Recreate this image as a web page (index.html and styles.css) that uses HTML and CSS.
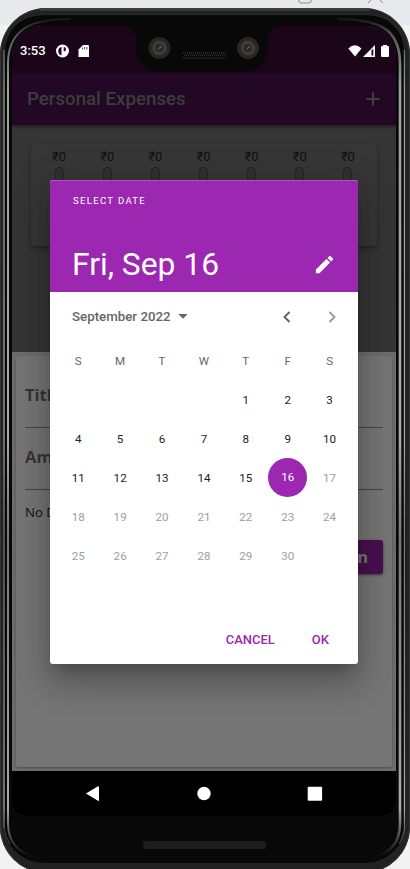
FILE: index.html
```html
<!DOCTYPE html>
<html lang="en">
<head>
<meta charset="utf-8">
<title>Personal Expenses</title>
<link rel="stylesheet" href="styles.css">
</head>
<body>
<div class="stage">
  <svg class="frame" width="410" height="869" viewBox="0 0 410 869" fill="none">
    <defs>
      <linearGradient id="edge" x1="0" y1="0" x2="0" y2="869" gradientUnits="userSpaceOnUse">
        <stop offset=".02" stop-color="#111"/><stop offset=".04" stop-color="#555"/><stop offset=".1" stop-color="#a0a0a2"/>
        <stop offset=".5" stop-color="#aaa"/><stop offset=".62" stop-color="#777"/><stop offset=".93" stop-color="#aaa"/><stop offset=".965" stop-color="#444"/><stop offset=".985" stop-color="#0a0a0a"/>
      </linearGradient>
    </defs>
    <path d="M299 0v1q0 2 2 2h8q2 0 2-2V0M368 3l4-4M383 3l-4-4" stroke="#8a8b90"/>
    <rect x="0" y="8" width="410" height="865" rx="46" fill="#222"/>
    <rect x=".5" y="8.500" width="409" height="864" rx="45.500" stroke="#333534"/>
    <path d="M40 9.500H370" stroke="#3d3f3e" stroke-width="2.500"/>
    <rect x="3" y="14" width="403" height="849" rx="41" fill="#080808"/>
    <path d="M4 70V56Q5 15 45 14.500H365Q405 15 405 56V70" stroke="#2b2c2c"/>
    <path d="M4 50V828" stroke="url(#edge)" stroke-width="1.300"/>
    <path d="M4.010 828L4 827.900Q5 836 10 844" stroke="#444"/>
    <path d="M70 19Q34 19 21 31Q8 42 8 64V823Q8 852 38 857.500" stroke="url(#edge)" stroke-width="2"/>
    <path d="M338 19Q374 19 388 31Q400 42 400 64V823Q400 852 372 857.500" stroke="url(#edge)" stroke-width="2.600"/>
    <path d="M404.500 50L404.510 828Q404 836 399 844" stroke="url(#edge)" stroke-width="1.400"/>
    <rect x="143" y="841" width="123" height="8" rx="3" fill="#1b1b1b"/>
    <path d="M144 843H265M145 845.500H265M144 848H265" stroke="#252525" stroke-dasharray="1 1"/>
  </svg>

  <div class="screen">
    <header class="status">
      <span class="clock">3:53</span>
      <svg class="status-left" width="34" height="14" viewBox="0 0 34 14">
        <circle cx="6.500" cy="7" r="6.500" fill="#fff"/>
        <path d="M5.500 3v8.500Q2.300 10.500 2.300 7T5.500 3ZM7.700 3Q10 3 10 5.200T7.700 7.500Z" fill="#1a0519"/>
        <path d="M27 1h5q1 0 1 1v11H22.500V5.500Z" fill="#fff"/>
        <path d="M26.500 3.500v2M28.700 3v2.500M30.900 3v2.500" stroke="#1a0519" stroke-width=".7"/>
      </svg>
      <svg class="status-right" width="42" height="14" viewBox="0 0 42 14">
        <path d="M.3 4.500Q6.800-2 13.500 4.500L7 12.500Z" fill="#fff"/>
        <path d="M27 1V13H15Z" fill="#fff"/><path d="M23.500 6v5.500h1.800V5Z" fill="#1a0519"/>
        <path d="M35 1h4v1h1q1 0 1 1v9q0 1-1 1h-6q-1 0-1-1V3q0-1 1-1h1Z" fill="#fff"/>
      </svg>
    </header>
    <div class="appbar">
      <h1>Personal Expenses</h1>
      <svg width="14" height="14" viewBox="0 0 14 14"><path d="M7 .5v13M.5 7h13" stroke="#3e403e" stroke-width="2"/></svg>
    </div>
    <section class="chart-area">
      <div class="chart">
        <div class="bar"><span>₹0</span><i></i></div>
        <div class="bar"><span>₹0</span><i></i></div>
        <div class="bar"><span>₹0</span><i></i></div>
        <div class="bar"><span>₹0</span><i></i></div>
        <div class="bar"><span>₹0</span><i></i></div>
        <div class="bar"><span>₹0</span><i></i></div>
        <div class="bar"><span>₹0</span><i></i></div>
      </div>
    </section>
    <section class="sheet">
      <div class="form">
        <div class="field">Titl</div>
        <div class="field">Am</div>
        <div class="chosen">No D</div>
        <div class="submit">n</div>
      </div>
    </section>
    <nav class="nav">
      <svg width="384" height="45" viewBox="0 0 384 45" fill="#fff">
        <path d="M74 22.500 85.500 15.500Q87 15 87 16V29Q87 30.500 85.500 29.500Z"/>
        <circle cx="192" cy="22.500" r="6.700"/>
        <rect x="295.700" y="15.700" width="14.400" height="14" rx="1"/>
      </svg>
    </nav>
  </div>

  <svg class="notch" width="160" height="50" viewBox="0 0 160 50" fill="none">
    <path d="M0 0H160Q144 0 144 14V20Q142 46 118 46H36Q13 46 12 20V14Q12 0 0 0Z" fill="#080808"/>
    <g id="cam">
      <circle cx="35.500" cy="22" r="11" fill="#2b2520"/><circle cx="35.500" cy="22" r="7.500" fill="#3c3936"/>
      <circle cx="35.500" cy="22" r="5" fill="#292928" stroke="#4b4946"/><path d="M34 23l4-3" stroke="#77706a"/>
    </g>
    <use href="#cam" x="88.500"/>
    <path d="M59 27H102M60 29.500H101M59 32H102" stroke="#303030" stroke-width="1.300" stroke-dasharray="1 1"/>
  </svg>

  <div class="dialog">
    <div class="dialog-head">
      <div class="caption">SELECT DATE</div>
      <div class="headline">
        <span>Fri, Sep 16</span>
        <svg width="23" height="23" viewBox="0 0 24 24" fill="#fff"><path d="M3 17.250V21h3.750L17.810 9.940l-3.750-3.750L3 17.250zM20.710 7.040a1 1 0 0 0 0-1.410l-2.340-2.340a1 1 0 0 0-1.410 0l-1.830 1.830 3.750 3.750 1.830-1.830z"/></svg>
      </div>
    </div>
    <div class="month">
      <span>September 2022</span>
      <svg class="caret" width="10" height="5" viewBox="0 0 10 5"><path d="M.3 0H9.700L5 4.800Z" fill="#666"/></svg>
      <svg class="prev" width="8" height="12" viewBox="0 0 8 12"><path d="M6.500 1 1.500 6l5 5" fill="none" stroke="#626262" stroke-width="1.900"/></svg>
      <svg width="8" height="12" viewBox="0 0 8 12"><path d="M1.500 1l5 5-5 5" fill="none" stroke="#999" stroke-width="1.900"/></svg>
    </div>
    <div class="days">
      <b>S</b><b>M</b><b>T</b><b>W</b><b>T</b><b>F</b><b>S</b>
      <span></span><span></span><span></span><span></span><span>1</span><span>2</span><span>3</span>
      <span>4</span><span>5</span><span>6</span><span>7</span><span>8</span><span>9</span><span>10</span>
      <span>11</span><span>12</span><span>13</span><span>14</span><span>15</span><span class="selected">16</span><span class="off">17</span>
      <span class="off">18</span><span class="off">19</span><span class="off">20</span><span class="off">21</span><span class="off">22</span><span class="off">23</span><span class="off">24</span>
      <span class="off">25</span><span class="off">26</span><span class="off">27</span><span class="off">28</span><span class="off">29</span><span class="off">30</span>
    </div>
    <div class="actions"><span>CANCEL</span><span>OK</span></div>
  </div>
</div>
</body>
</html>
```
FILE: styles.css
```css
* { box-sizing: border-box; }
body { margin: 0; background: #f2f2f2; font-family: Roboto, sans-serif; }
.stage {
  position: relative;
  width: 410px;
  height: 869px;
  overflow: hidden;
  padding: 26px 14px 0 12px;
  background: linear-gradient(#e8e9ed 25px, #f2f2f2 25px);
}
.frame { position: absolute; left: 0; top: 0; }
.screen {
  position: relative;
  display: flex;
  flex-direction: column;
  width: 384px;
  height: 790px;
  overflow: hidden;
  border-radius: 30px 30px 14px 14px;
  background: #353535;
}
.notch { position: absolute; left: 124px; top: 26px; }
.status {
  display: flex;
  align-items: center;
  height: 47px;
  padding: 2px 6px 0 8px;
  background: #1a0519;
  color: #fff;
}
.clock { width: 36px; font-size: 13px; font-weight: 500; }
.status-right { margin-left: auto; }
.appbar {
  position: relative;
  display: flex;
  align-items: center;
  justify-content: space-between;
  height: 52px;
  padding: 0 16px 0 15px;
  background: #220824;
  box-shadow: 0 2px 3px rgba(0, 0, 0, .4);
}
.appbar h1 { margin: 0; font-size: 18.7px; font-weight: 500; color: #3b3d3b; }
.chart-area { height: 227px; padding: 19px 19px 0; background: #353535; }
.chart {
  display: flex;
  justify-content: space-around;
  height: 102px;
  padding: 5px 5px 0 4px;
  border-radius: 3px;
  background: #363636;
  box-shadow: 0 2px 5px rgba(0, 0, 0, .35);
}
.bar { display: flex; flex-direction: column; align-items: center; font-size: 13px; color: #101010; line-height: 15px; }
.bar i { width: 9px; height: 57px; margin-top: 3px; border: 1px solid #242424; border-radius: 5px; background: #303030; }
.sheet { height: 419px; padding: 4px; background: #6e6e6e; }
.form {
  display: flex;
  flex-direction: column;
  height: 411px;
  padding: 10px 9px 0;
  border-radius: 3px;
  background: #757575;
  box-shadow: 0 1px 3px rgba(0, 0, 0, .3);
}
.field {
  height: 62px;
  padding-top: 17px;
  border-bottom: 1px solid #454545;
  font: bold 16.5px/24px "Open Sans", sans-serif;
  color: #353535;
}
.chosen { margin-top: 12px; font: 13.2px/20px "Open Sans", sans-serif; color: #111; }
.submit {
  align-self: flex-end;
  width: 102px;
  height: 34px;
  margin-top: 18px;
  padding-right: 15px;
  border-radius: 3px;
  background: #48104f;
  box-shadow: 0 1px 3px rgba(0, 0, 0, .5);
  color: #777;
  font: bold 16.5px/34px "Open Sans", sans-serif;
  text-align: right;
}
.nav { height: 45px; background: #000; }
.nav svg { display: block; }
.dialog {
  position: absolute;
  left: 50px;
  top: 180px;
  width: 308px;
  height: 484px;
  overflow: hidden;
  display: flex;
  flex-direction: column;
  border-radius: 3px;
  background: #fff;
  box-shadow: 0 10px 15px -5px rgba(0, 0, 0, .2), 0 20px 32px 2px rgba(0, 0, 0, .17), 0 8px 38px 5px rgba(0, 0, 0, .12);
}
.dialog-head { height: 112px; padding: 14px 22px 0 23px; background: #9c27b0; color: #fff; border-top: 1px solid #b052c0; }
.caption { font-size: 9.5px; line-height: 12px; letter-spacing: 1.35px; }
.headline { display: flex; align-items: center; justify-content: space-between; margin: 37px 0 0 -1px; font-size: 31.8px; line-height: 40px; }
.month { display: flex; align-items: center; height: 49px; padding: 0 22px; font-size: 13.3px; font-weight: 500; color: #666; }
.caret { margin-left: 7px; }
.prev { margin-left: auto; margin-right: 37px; }
.days {
  display: grid;
  grid-template-columns: repeat(7, 41.9px);
  grid-auto-rows: 39.1px;
  place-items: center;
  width: 294px;
  height: 274px;
  margin-left: 7.3px;
  font-size: 11.6px;
  color: #222;
}
.days b { font-weight: 400; color: #666; }
.days .off { color: #9e9e9e; }
.days .selected { width: 39px; height: 39px; border-radius: 50%; background: #9c27b0; color: #fff; line-height: 39px; text-align: center; }
.actions { display: flex; justify-content: flex-end; gap: 37px; padding: 17px 29px 0 0; font-size: 13px; line-height: 16px; font-weight: 500; color: #9c27b0; }
```
